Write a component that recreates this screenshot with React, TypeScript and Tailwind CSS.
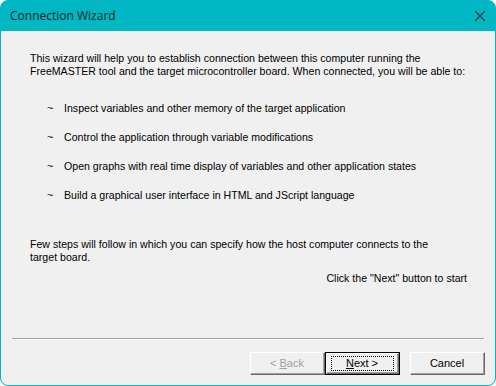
const bullets = [
  "Inspect variables and other memory of the target application",
  "Control the application through variable modifications",
  "Open graphs with real time display of variables and other application states",
  "Build a graphical user interface in HTML and JScript language",
];

function CloseIcon() {
  return (
    <svg width="12" height="12" viewBox="0 0 12 12">
      <path d="M1 1 L11 11 M11 1 L1 11" stroke="#1b3a3d" strokeWidth="1.1" />
    </svg>
  );
}

function ClassicButton({
  children,
  disabled,
  isDefault,
}: {
  children: React.ReactNode;
  disabled?: boolean;
  isDefault?: boolean;
}) {
  return (
    <div
      className={
        isDefault
          ? "h-[23px] w-[75px] border border-black"
          : "h-[23px] w-[75px]"
      }
    >
      <div className="flex h-full w-full border-t border-l border-t-white border-l-white border-r border-b border-r-[#696969] border-b-[#696969] bg-[#f0f0f0]">
        <div
          className={
            "flex flex-1 items-center justify-center border-r border-b border-r-[#a0a0a0] border-b-[#a0a0a0] " +
            (disabled ? "text-[#a0a0a0]" : "text-black")
          }
        >
          {isDefault ? (
            <span className="flex h-[15px] w-[63px] items-center justify-center border border-dotted border-black">
              {children}
            </span>
          ) : (
            children
          )}
        </div>
      </div>
    </div>
  );
}

export default function App() {
  return (
    <div className="h-[386px] w-[496px] bg-white">
      <div className="flex h-[386px] w-[496px] flex-col overflow-hidden rounded-lg border border-[#00b7c3] bg-[#00b7c3]">
        <div className="flex h-[30px] shrink-0 items-center justify-between pl-[9px] pr-[9px] font-['Open_Sans',sans-serif] text-[12px] text-[#0d1f21]">
          <span>Connection Wizard</span>
          <CloseIcon />
        </div>
        <div className="flex flex-1 flex-col bg-[#f0f0f0] font-['Liberation_Sans',Arial,sans-serif] text-[10.6px] leading-[13px] text-black">
          <div className="pl-[29px] pr-[12px] pt-[21px]">
            <p>
              This wizard will help you to establish connection between this computer running the
              <br />
              FreeMASTER tool and the target microcontroller board. When connected, you will be able to:
            </p>
            <ul className="mt-[24px] flex flex-col gap-[16px]">
              {bullets.map((b) => (
                <li key={b} className="flex">
                  <span className="w-[17px] pl-[17px]"></span>
                  <span className="w-[17px] text-[11px]">~</span>
                  <span>{b}</span>
                </li>
              ))}
            </ul>
            <p className="mt-[36px]">
              Few steps will follow in which you can specify how the host computer connects to the
              <br />
              target board.
            </p>
            <p className="mt-[8px] pr-[16px] text-right">Click the "Next" button to start</p>
          </div>
          <div className="flex-1" />
          <div className="mx-[11px] border-t border-b border-t-[#a0a0a0] border-b-white" />
          <div className="flex justify-end px-[10px] pb-[10px] pt-[12px] text-[11px]">
            <ClassicButton disabled>
              &lt; <span className="ml-[3px] underline">B</span>ack
            </ClassicButton>
            <ClassicButton isDefault>
              <span className="underline">N</span>ext &gt;
            </ClassicButton>
            <div className="w-[10px]" />
            <ClassicButton>Cancel</ClassicButton>
          </div>
        </div>
      </div>
    </div>
  );
}
